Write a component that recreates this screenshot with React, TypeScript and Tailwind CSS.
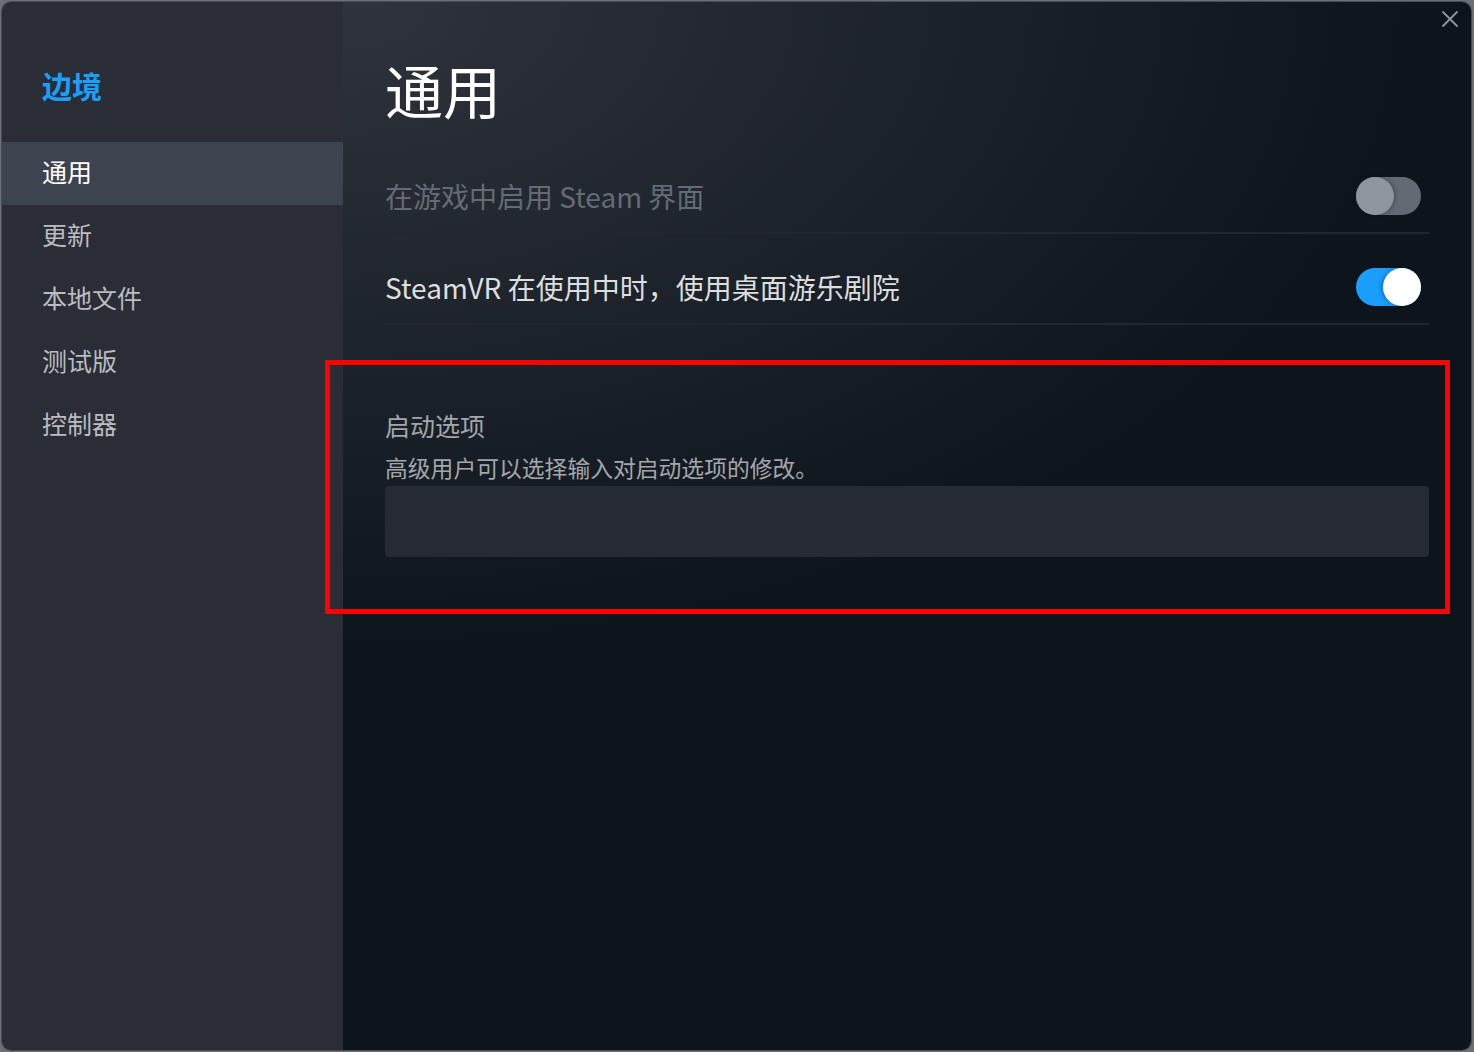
import React from "react";

function Toggle({ on }: { on: boolean }) {
  return (
    <div
      className={
        on
          ? "relative w-[65px] h-[38px] rounded-full bg-[#1a9fff] shrink-0"
          : "relative w-[65px] h-[38px] rounded-full bg-[#646a74] shrink-0"
      }
    >
      <div
        className={
          on
            ? "absolute right-0 top-0 w-[38px] h-[38px] rounded-full bg-white shadow-[-2px_0_4px_rgba(0,0,0,0.25)]"
            : "absolute left-0 top-0 w-[38px] h-[38px] rounded-full bg-[#8f959c] shadow-[2px_0_4px_rgba(0,0,0,0.25)]"
        }
      />
    </div>
  );
}

const items = ["通用", "更新", "本地文件", "测试版", "控制器"];

export default function App() {
  return (
    <div className="relative w-[1474px] h-[1052px] bg-[#6c7076] pt-[2px] pl-[2px] pr-[3px] pb-[2px] font-['Noto_Sans_CJK_SC',sans-serif] overflow-hidden">
      <div className="relative flex w-full h-full rounded-[9px] overflow-hidden shadow-[0_0_0_1px_#474c55]">
        {/* Sidebar */}
        <div className="w-[341px] shrink-0 bg-[#2a2d35] flex flex-col">
          <div className="h-[140px] pt-[63px] pl-[40px]">
            <div className="text-[30px] leading-[40px] font-bold text-[#1a9fff]">边境</div>
          </div>
          {items.map((t, i) => (
            <div
              key={t}
              className={
                i === 0
                  ? "h-[63px] flex items-center pl-[40px] pb-[3px] bg-[#3d4450] text-white text-[25px]"
                  : "h-[63px] flex items-center pl-[40px] pb-[3px] text-[#b9bcc0] text-[25px]"
              }
            >
              {t}
            </div>
          ))}
        </div>

        {/* Main */}
        <div className="flex-1 relative bg-[radial-gradient(ellipse_95%_62%_at_0%_0%,#2f343c_0%,#0e141b_100%)] pl-[42px] pr-[42px] pt-[51px]">
          <div className="text-[58px] leading-[72px] text-white">通用</div>
          <div className="mt-[18px]">
            <div className="pt-[34px] pb-[17px] flex items-center justify-between pr-[8px]">
              <div className="text-[28px] leading-[38px] text-[#656b74]">在游戏中启用 Steam 界面</div>
              <Toggle on={false} />
            </div>
            <div className="h-[2px] bg-[#22262d]" />
            <div className="pt-[34px] pb-[17px] flex items-center justify-between pr-[8px]">
              <div className="text-[28px] leading-[38px] text-[#dcdedf]">SteamVR 在使用中时，使用桌面游乐剧院</div>
              <Toggle on={true} />
            </div>
            <div className="h-[2px] bg-[#22262d]" />
          </div>
          <div className="mt-[84px] text-[25px] leading-[32px] text-[#a3a7ac]">启动选项</div>
          <div className="mt-[11px] text-[22.8px] leading-[32px] text-[#a3a7ac]">高级用户可以选择输入对启动选项的修改。</div>
          <div className="mt-[2px] h-[71px] rounded-[4px] bg-[#252a33]" />

          {/* Close button */}
          <button className="absolute top-[9px] right-[13px] w-[16px] h-[16px]">
            <svg width="16" height="16" viewBox="0 0 16 16" fill="none">
              <path d="M1 1L15 15M15 1L1 15" stroke="#8a98a0" strokeWidth="1.8" strokeLinecap="round" />
            </svg>
          </button>
        </div>
      </div>

      {/* Red annotation box */}
      <div className="absolute left-[325px] top-[360px] w-[1125px] h-[254px] border-[5px] border-[#ff0000] pointer-events-none" />
    </div>
  );
}
